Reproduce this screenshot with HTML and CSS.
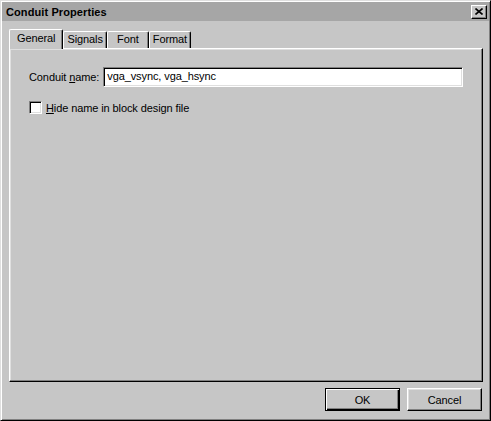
FILE: index.html
```html
<!DOCTYPE html>
<html>
<head>
	<title>Conduit Properties</title>
	<link rel="stylesheet" href="styles.css">
	<meta charset="utf-8">
</head>
<body>
	<div class='window'>
		<div class='titlebar'>
			<span class='title'>Conduit Properties</span>
			<div class='close__button'>
				<svg width="8" height="7" viewBox="0 0 8 7"><path d="M0.5 0.5 L7.5 6.5 M7.5 0.5 L0.5 6.5" stroke="black" stroke-width="1.6" fill="none"/></svg>
			</div>
		</div>

		<div class='content'>
			<div class='tabs'>
				<div class='tab tab__active'>General</div>
				<div class='tab'>Signals</div>
				<div class='tab'>Font</div>
				<div class='tab'>Format</div>
			</div>

			<div class='panel'>
				<div class='row__name'>
					<label class='label'>Conduit <u>n</u>ame:</label>
					<div class='text__field'>vga_vsync, vga_hsync</div>
				</div>
				<div class='row__check'>
					<div class='check__box'></div>
					<span class='label'><u>H</u>ide name in block design file</span>
				</div>
			</div>

			<div class='div__button'>
				<div class='button button__default'>OK</div>
				<div class='button'>Cancel</div>
			</div>
		</div>
	</div>
</body>
</html>
```

FILE: styles.css
```css
* {
	box-sizing: border-box;
	margin: 0;
	padding: 0;
}

body {
	width: 491px;
	height: 421px;
	overflow: hidden;
	background: #c6c6c6;
	font-family: "Liberation Sans", Arial, sans-serif;
	font-size: 11px;
	letter-spacing: -0.1px;
	color: #000;
}

.window {
	width: 491px;
	height: 421px;
	display: flex;
	flex-direction: column;
	padding: 1px;
	background: #c6c6c6;
	border-top: 1px solid #dfdfdf;
	border-left: 1px solid #dfdfdf;
	border-right: 1px solid #000;
	border-bottom: 1px solid #000;
	box-shadow: inset 1px 1px #fff, inset -1px -1px #808080;
}

.titlebar {
	height: 19px;
	display: flex;
	align-items: center;
	padding: 0 2px 0 4px;
	background: #a6a6a6;
}

.title {
	font-weight: bold;
	letter-spacing: 0.1px;
}

.close__button {
	margin-left: auto;
	width: 16px;
	height: 14px;
	display: flex;
	align-items: center;
	justify-content: center;
	background: #c6c6c6;
	border-top: 1px solid #fff;
	border-left: 1px solid #fff;
	border-right: 1px solid #000;
	border-bottom: 1px solid #000;
	box-shadow: inset -1px -1px #808080;
}

.content {
	flex: 1;
	display: flex;
	flex-direction: column;
	padding: 8px 6px 8px 7px;
}

.tabs {
	height: 20px;
	display: flex;
	align-items: flex-end;
	margin-bottom: -1px;
}

.tab {
	min-width: 42px;
	height: 17px;
	margin-bottom: 1px;
	padding: 0 3px;
	text-align: center;
	line-height: 15px;
	background: #c6c6c6;
	border-top: 1px solid #fff;
	border-left: 1px solid #fff;
	border-right: 1px solid #000;
	border-radius: 2px 2px 0 0;
	box-shadow: inset -1px 0 #808080;
}

.tab__active {
	height: 20px;
	margin-bottom: 0;
	padding: 0 7px;
	line-height: 17px;
	position: relative;
	z-index: 1;
}

.panel {
	flex: 1;
	padding: 18px 10px 18px 19px;
	border-top: 1px solid #fff;
	border-left: 1px solid #fff;
	border-right: 1px solid #000;
	border-bottom: 1px solid #000;
	box-shadow: inset -1px -1px #808080, inset 1px 1px #dfdfdf;
}

.label {
	white-space: nowrap;
	flex-shrink: 0;
}

.row__name {
	display: flex;
	align-items: center;
	gap: 4px;
}

.text__field {
	width: 360px;
	height: 20px;
	flex-shrink: 0;
	padding-left: 3px;
	line-height: 16px;
	background: #fff;
	border-top: 1px solid #808080;
	border-left: 1px solid #808080;
	border-right: 1px solid #fff;
	border-bottom: 1px solid #fff;
	box-shadow: inset 1px 1px #000, inset -1px -1px #dfdfdf;
}

.row__check {
	display: flex;
	align-items: center;
	gap: 4px;
	margin-top: 14px;
}

.check__box {
	width: 13px;
	height: 13px;
	background: #fff;
	border-top: 1px solid #808080;
	border-left: 1px solid #808080;
	border-right: 1px solid #fff;
	border-bottom: 1px solid #fff;
	box-shadow: inset 1px 1px #000, inset -1px -1px #dfdfdf;
}

.div__button {
	display: flex;
	justify-content: flex-end;
	gap: 7px;
	margin-top: 6px;
	padding-right: 1px;
}

.button {
	width: 75px;
	height: 23px;
	display: flex;
	align-items: center;
	justify-content: center;
	background: #c6c6c6;
	border-top: 1px solid #fff;
	border-left: 1px solid #fff;
	border-right: 1px solid #000;
	border-bottom: 1px solid #000;
	box-shadow: inset -1px -1px #808080, inset 1px 1px #dfdfdf;
}

.button__default {
	border: 1px solid #000;
	box-shadow: inset 1px 1px #fff, inset -1px -1px #000, inset -2px -2px #808080;
}
```
